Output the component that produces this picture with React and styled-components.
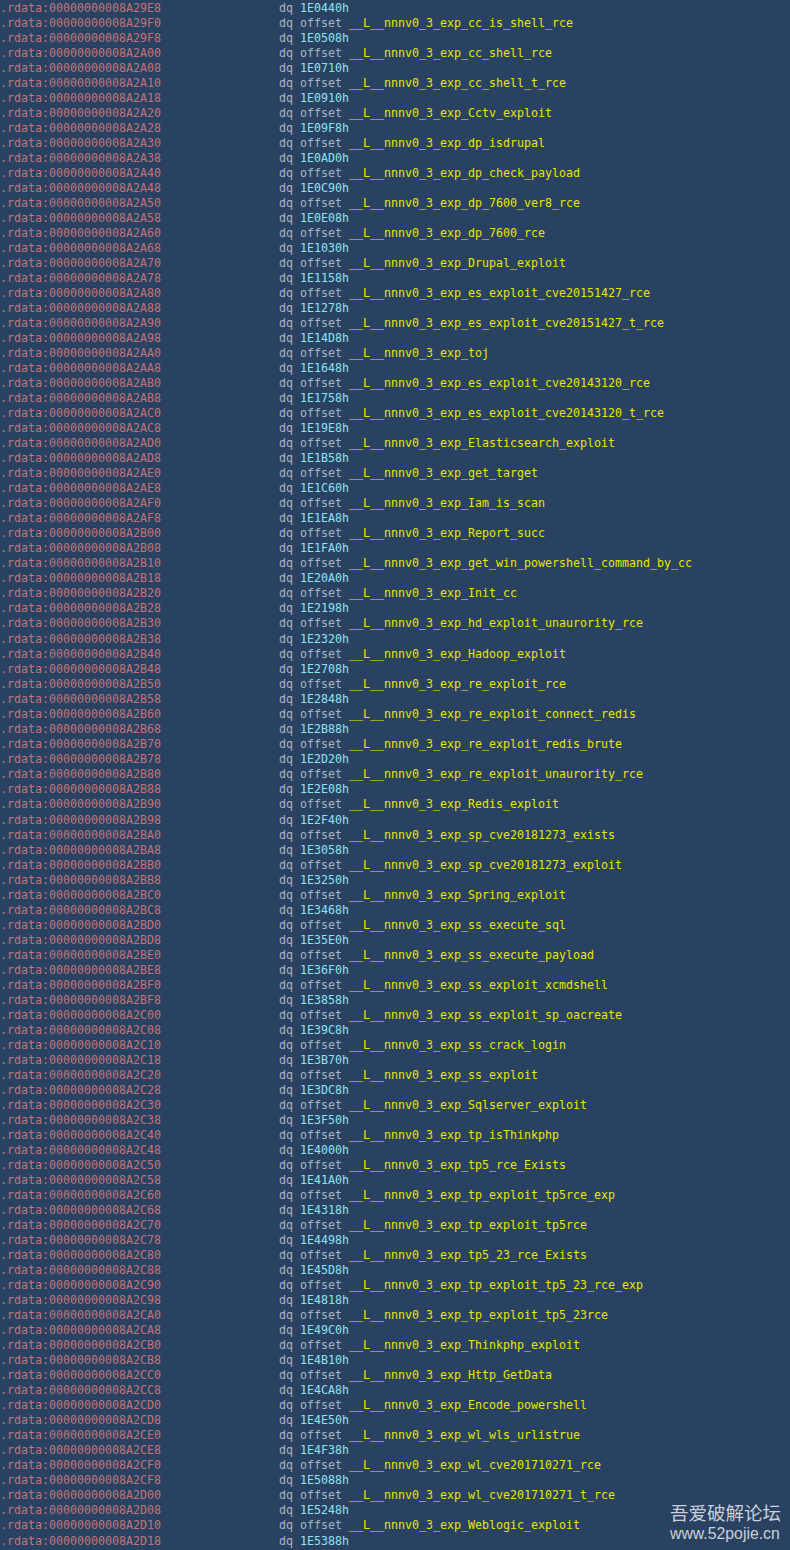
import React from "react";
import styled, { createGlobalStyle } from "styled-components";

const hexValues = "1E0440h 1E0508h 1E0710h 1E0910h 1E09F8h 1E0AD0h 1E0C90h 1E0E08h 1E1030h 1E1158h 1E1278h 1E14D8h 1E1648h 1E1758h 1E19E8h 1E1B58h 1E1C60h 1E1EA8h 1E1FA0h 1E20A0h 1E2198h 1E2320h 1E2708h 1E2848h 1E2B88h 1E2D20h 1E2E08h 1E2F40h 1E3058h 1E3250h 1E3468h 1E35E0h 1E36F0h 1E3858h 1E39C8h 1E3B70h 1E3DC8h 1E3F50h 1E4000h 1E41A0h 1E4318h 1E4498h 1E45D8h 1E4818h 1E49C0h 1E4B10h 1E4CA8h 1E4E50h 1E4F38h 1E5088h 1E5248h 1E5388h".split(" ");
const names = "cc_is_shell_rce cc_shell_rce cc_shell_t_rce Cctv_exploit dp_isdrupal dp_check_payload dp_7600_ver8_rce dp_7600_rce Drupal_exploit es_exploit_cve20151427_rce es_exploit_cve20151427_t_rce toj es_exploit_cve20143120_rce es_exploit_cve20143120_t_rce Elasticsearch_exploit get_target Iam_is_scan Report_succ get_win_powershell_command_by_cc Init_cc hd_exploit_unaurority_rce Hadoop_exploit re_exploit_rce re_exploit_connect_redis re_exploit_redis_brute re_exploit_unaurority_rce Redis_exploit sp_cve20181273_exists sp_cve20181273_exploit Spring_exploit ss_execute_sql ss_execute_payload ss_exploit_xcmdshell ss_exploit_sp_oacreate ss_crack_login ss_exploit Sqlserver_exploit tp_isThinkphp tp5_rce_Exists tp_exploit_tp5rce_exp tp_exploit_tp5rce tp5_23_rce_Exists tp_exploit_tp5_23_rce_exp tp_exploit_tp5_23rce Thinkphp_exploit Http_GetData Encode_powershell wl_wls_urlistrue wl_cve201710271_rce wl_cve201710271_t_rce Weblogic_exploit".split(" ");

/* Rows that sit one pixel lower than the regular 15px pitch. */
const spacedRows = new Set([42, 54, 102]);

const Global = createGlobalStyle`
  html, body { margin: 0; padding: 0; background: #2a4262; }
`;
const Listing = styled.div`
  position: relative;
  width: 790px;
  height: 1550px;
  box-sizing: border-box;
  padding-top: 1px;
  overflow: hidden;
  background: #2a4262;
  font-family: "DejaVu Sans Mono", "Liberation Mono", monospace;
  font-size: 11.63px;
  display: flex;
  flex-direction: column;
  white-space: pre;
`;
const Row = styled.div`
  display: flex;
  align-items: center;
  flex: none;
  height: 15px;
  line-height: 15px;
  margin-top: ${(p) => (p.$spaced ? 1 : 0)}px;
`;
const Address = styled.span`
  width: 279px;
  flex: none;
  color: #c07478;
`;
const Mnemonic = styled.span`
  width: 21px;
  flex: none;
  color: #a9b4c0;
`;
const Hex = styled.span`
  color: #8ee3f0;
`;
const Keyword = styled.span`
  color: #a9b4c0;
`;
const Symbol = styled.span`
  color: #e6e600;
`;
const Watermark = styled.div`
  position: absolute;
  right: 9px;
  bottom: 6px;
  width: 111px;
  display: flex;
  flex-direction: column;
  align-items: flex-start;
  color: #c8d0da;
`;
const WatermarkTitle = styled.div`
  font-family: "Noto Sans CJK SC", sans-serif;
  font-size: 18.5px;
  line-height: 24px;
`;
const WatermarkUrl = styled.div`
  font-family: "Liberation Sans", sans-serif;
  font-size: 15.8px;
  line-height: 20px;
`;

const addr = (i) =>
  ".rdata:" + (0x8a29e8 + i * 8).toString(16).toUpperCase().padStart(16, "0");

export default function App() {
  const rows = [];
  for (let i = 0; i < 103; i++) {
    const odd = i % 2 === 1;
    rows.push(
      <Row key={i} $spaced={spacedRows.has(i)}>
        <Address>{addr(i)}</Address>
        <Mnemonic>dq</Mnemonic>
        {odd ? (
          <span>
            <Keyword>offset </Keyword>
            <Symbol>{"__L__nnnv0_3_exp_" + names[(i - 1) / 2]}</Symbol>
          </span>
        ) : (
          <Hex>{hexValues[i / 2]}</Hex>
        )}
      </Row>
    );
  }
  return (
    <>
      <Global />
      <Listing>
        {rows}
        <Watermark>
          <WatermarkTitle>吾爱破解论坛</WatermarkTitle>
          <WatermarkUrl>www.52pojie.cn</WatermarkUrl>
        </Watermark>
      </Listing>
    </>
  );
}
